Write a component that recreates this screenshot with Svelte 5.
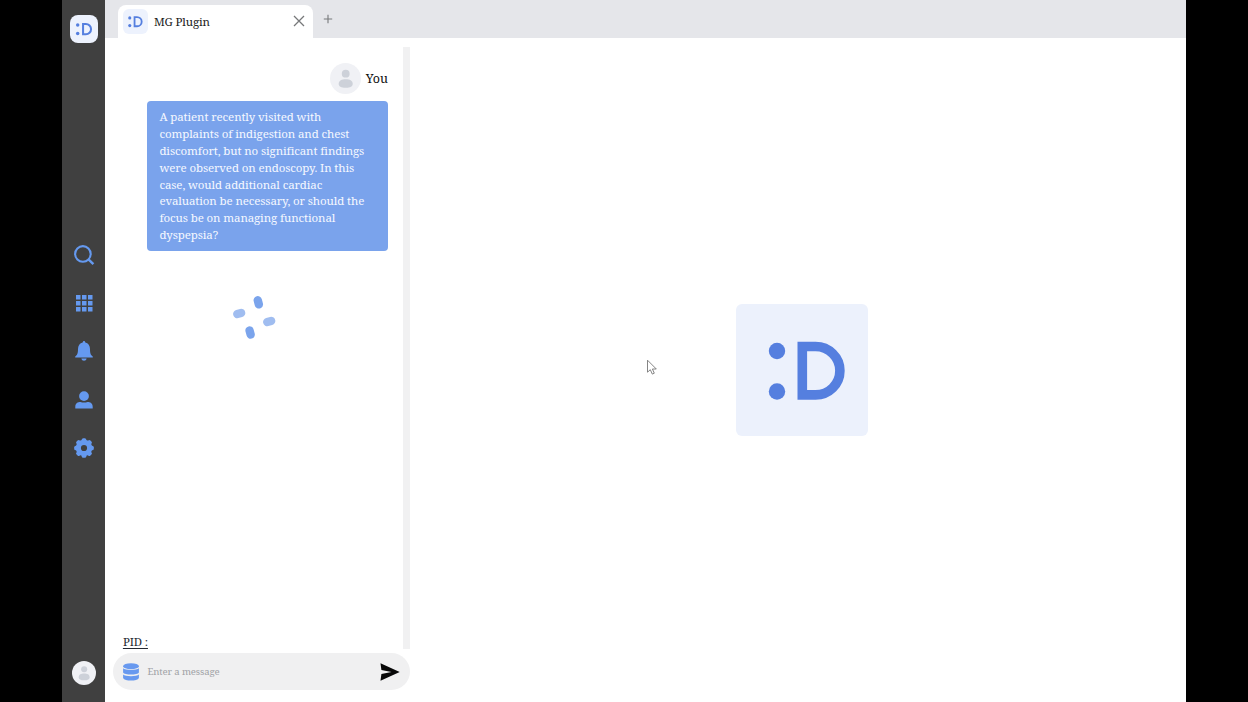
<script>
  const lines = [
    'A patient recently visited with',
    'complaints of indigestion and chest',
    'discomfort, but no significant findings',
    'were observed on endoscopy. In this',
    'case, would additional cardiac',
    'evaluation be necessary, or should the',
    'focus be on managing functional',
    'dyspepsia?'
  ];
  const teeth = [0, 45, 90, 135, 180, 225, 270, 315];
</script>

{#snippet logo()}
  <svg viewBox="0 0 132 132" class="mark" aria-label="Logo">
    <circle cx="41" cy="47" r="8.2" fill="#557fdf" />
    <circle cx="41" cy="87.5" r="8.2" fill="#557fdf" />
    <path d="M66.3 42.5H79.5A24.4 24.2 0 0 1 79.5 90.9H66.3Z" fill="none" stroke="#557fdf" stroke-width="9.6" />
  </svg>
{/snippet}

{#snippet avatar()}
  <svg viewBox="0 0 30 30" class="mark" aria-hidden="true">
    <circle cx="15" cy="15" r="15" fill="#f0f1f5" />
    <circle cx="15.2" cy="10.3" r="3.8" fill="#cdd1d9" />
    <path d="M8.4 20.2c0-3.2 3-4.5 6.8-4.5s6.8 1.3 6.8 4.5c0 2.8-2.2 3.8-6.8 3.8s-6.8-1-6.8-3.8z" fill="#cdd1d9" />
  </svg>
{/snippet}

<div class="screen">
  <nav class="sidebar">
    <div class="brand">{@render logo()}</div>
    <div class="icons">
      <svg viewBox="0 0 22 22"><circle cx="9.9" cy="9.9" r="7.8" fill="none" stroke="#6599ef" stroke-width="2.1" /><path d="M15.2 15.2l5.200 5" stroke="#6599ef" stroke-width="2.5" /></svg>
      <svg viewBox="0 0 22 22" fill="#6599ef">
        {#each [3, 9, 15] as y}{#each [3, 9, 15] as x}<rect x={x} y={y} width="4.5" height="4.5" />{/each}{/each}
      </svg>
      <svg viewBox="0 0 22 22" fill="#6599ef"><path d="M11 .9c.8 0 1.2.7 1.3 1.6C15.3 3.2 17 5.6 17 9c0 4.4.7 6 2.800 7.600v1H2.200v-1C4.300 15 5 13.400 5 9c0-3.400 1.700-5.800 4.700-6.500C9.800 1.600 10.200.9 11 .9z" /><path d="M8.400 18.600h5.200c-.3 1.400-1.300 2.200-2.600 2.200s-2.300-.8-2.600-2.200z" /></svg>
      <svg viewBox="0 0 22 22" fill="#6599ef"><circle cx="11" cy="7.1" r="4.9" /><path d="M2.300 19.500v-1.800c0-3.300 2.500-4.700 5.200-4.700 2 .8 5 .8 7 0 2.700 0 5.200 1.400 5.200 4.700v1.800z" /></svg>
      <svg viewBox="0 0 22 22" fill="#6599ef"><circle cx="11" cy="11" r="5.7" fill="none" stroke="#6599ef" stroke-width="5.2" />
        {#each teeth as a}<rect x="8.7" y="1.2" width="4.6" height="5" rx="1.6" transform="rotate({a} 11 11)" />{/each}
      </svg>
    </div>
    <div class="account">{@render avatar()}</div>
  </nav>

  <main>
    <header>
      <div class="tab">
        <div class="tab-logo">{@render logo()}</div>
        <span class="tab-title">MG Plugin</span>
        <svg class="close" viewBox="0 0 12 12"><path d="M1 1l10 10M11 1L1 11" stroke="#77787a" stroke-width="1.3" /></svg>
      </div>
      <svg class="plus" viewBox="0 0 10 10"><path d="M5 .8v8.400M.8 5h8.400" stroke="#77787a" stroke-width="1.1" /></svg>
    </header>
    <div class="body">
      <section class="panel">
        <div class="chat">
          <div class="thread">
            <div class="sender"><div class="face">{@render avatar()}</div><span>You</span></div>
            <div class="bubble">{#each lines as line}<div>{line}</div>{/each}</div>
            <svg class="loader" viewBox="0 0 44 44">
              <rect x="22.1" y="1" width="8.4" height="12.6" rx="4.2" fill="#7ba4ec" transform="rotate(-15 26.3 7.3)" />
              <rect x="13.9" y="31.2" width="8.4" height="12.6" rx="4.2" fill="#7ba4ec" transform="rotate(-15 18.1 37.5)" />
              <rect x="1" y="14.3" width="12.4" height="8.4" rx="4.2" fill="#a0bdf0" transform="rotate(-15 7.2 18.5)" />
              <rect x="31" y="22.3" width="12.4" height="8.4" rx="4.2" fill="#a0bdf0" transform="rotate(-15 37.2 26.5)" />
            </svg>
            <div class="pid">PID :</div>
          </div>
          <div class="scroll"></div>
        </div>
        <div class="composer">
          <svg class="database" viewBox="0 0 18 20" fill="#6899ef"><ellipse cx="9" cy="4.2" rx="7.9" ry="3" /><path d="M1.100 6.200c2 2.300 13.800 2.300 15.800 0v4.300c-1.300 2.700-14.500 2.700-15.800 0zM1.100 12.500c2 2.300 13.800 2.300 15.800 0v3.400c-1.300 3.500-14.500 3.500-15.800 0z" /></svg>
          <span class="hint">Enter a message</span>
          <svg class="send" viewBox="0 0 20 18"><path d="M.5.2L19.700 9 .5 17.800 1.400 11 11.500 9 1.400 7z" fill="#080808" /></svg>
        </div>
      </section>
      <section class="stage"><div class="hero">{@render logo()}</div></section>
    </div>
  </main>
  <svg class="pointer" viewBox="0 0 12 17"><path d="M1.500 1.200v12l2.800-2.500 2 4.400 2-.9-1.900-4.200h3.900z" fill="#fff" stroke="#777" stroke-width=".9" /></svg>
</div>

<style>
  :global(body) { background: #000; }
  .screen { position: relative; box-sizing: border-box; width: 1248px; height: 702px; padding: 0 62.4px; display: flex; overflow: hidden; background: #000; font-family: "Noto Serif", "Droid Serif", "DejaVu Serif Condensed", "DejaVu Serif", serif; }
  svg { display: block; flex: none; }
  .mark { width: 100%; height: 100%; }
  .sidebar { box-sizing: border-box; width: 43px; flex: none; background: #404040; display: flex; flex-direction: column; align-items: center; padding: 15px 0 17px; }
  .brand { width: 28px; height: 28px; border-radius: 8px; background: #edf2fd; }
  .brand .mark { margin-left: -1px; }
  .icons { margin-top: 200.5px; display: flex; flex-direction: column; gap: 26.4px; }
  .icons svg { width: 22px; height: 22px; }
  .account { width: 24px; height: 24px; margin-top: auto; }
  main { flex: 1; min-width: 0; background: #fff; display: flex; flex-direction: column; }
  header { height: 37.5px; flex: none; background: #e5e6ea; display: flex; box-sizing: border-box; padding: 5px 0 0 12.5px; }
  .tab { box-sizing: border-box; width: 195px; background: #fff; border-radius: 8px 8px 0 0; display: flex; align-items: center; padding: 0 7.5px 0 5.5px; }
  .tab-logo { width: 25px; height: 25px; background: #edf2fd; border-radius: 6px; }
  .tab-logo .mark { margin-left: -1.5px; }
  .tab-title { margin-left: 5.5px; font-size: 11.5px; letter-spacing: -.13px; color: #222; white-space: nowrap; }
  .close { width: 12px; height: 12px; margin-left: auto; }
  .plus { width: 10px; height: 10px; margin: 9px 0 0 10px; }
  .body { flex: 1; display: flex; min-height: 0; }
  .panel { width: 304.5px; flex: none; display: flex; flex-direction: column; }
  .chat { height: 611px; display: flex; padding-top: 9.5px; box-sizing: border-box; }
  .thread { flex: 1; display: flex; flex-direction: column; padding: 15px 15.5px 0 17.5px; }
  .scroll { width: 6.5px; background: #f1f1f2; }
  .sender { align-self: flex-end; height: 32px; display: flex; align-items: center; gap: 5px; font-size: 12.5px; color: #111; }
  .face { width: 31px; height: 31px; }
  .bubble { box-sizing: border-box; width: 240.5px; height: 150.5px; margin-top: 6.5px; align-self: flex-end; padding: 8.7px 12px 0; border-radius: 4px; background: #7aa3ec; color: #f5f8ff; font-size: 11.5px; letter-spacing: -.115px; line-height: 16.85px; white-space: nowrap; }
  .loader { width: 44px; height: 44px; margin: 43.5px 0 0 109px; }
  .pid { margin-top: auto; padding-bottom: .5px; font-size: 11.4px; letter-spacing: -.1px; line-height: 13px; color: #252932; text-decoration: underline; text-underline-offset: 2px; }
  .composer { box-sizing: border-box; height: 37px; width: 297px; margin: 4.5px 0 0 7.5px; border-radius: 19px; background: #f0f0f1; display: flex; align-items: center; padding: 0 10px 0 9.5px; }
  .database { width: 18px; height: 20px; }
  .hint { margin-left: 7px; color: #a0a2a6; font-size: 9.6px; letter-spacing: -.13px; white-space: nowrap; }
  .send { width: 20px; height: 18px; margin-left: auto; }
  .stage { flex: 1; display: flex; align-items: center; justify-content: center; padding: 1px 0 0 8px; }
  .hero { width: 132px; height: 132px; border-radius: 6px; background: #ecf1fc; }
  .pointer { position: absolute; left: 645.5px; top: 359px; width: 12px; height: 17px; }
</style>
